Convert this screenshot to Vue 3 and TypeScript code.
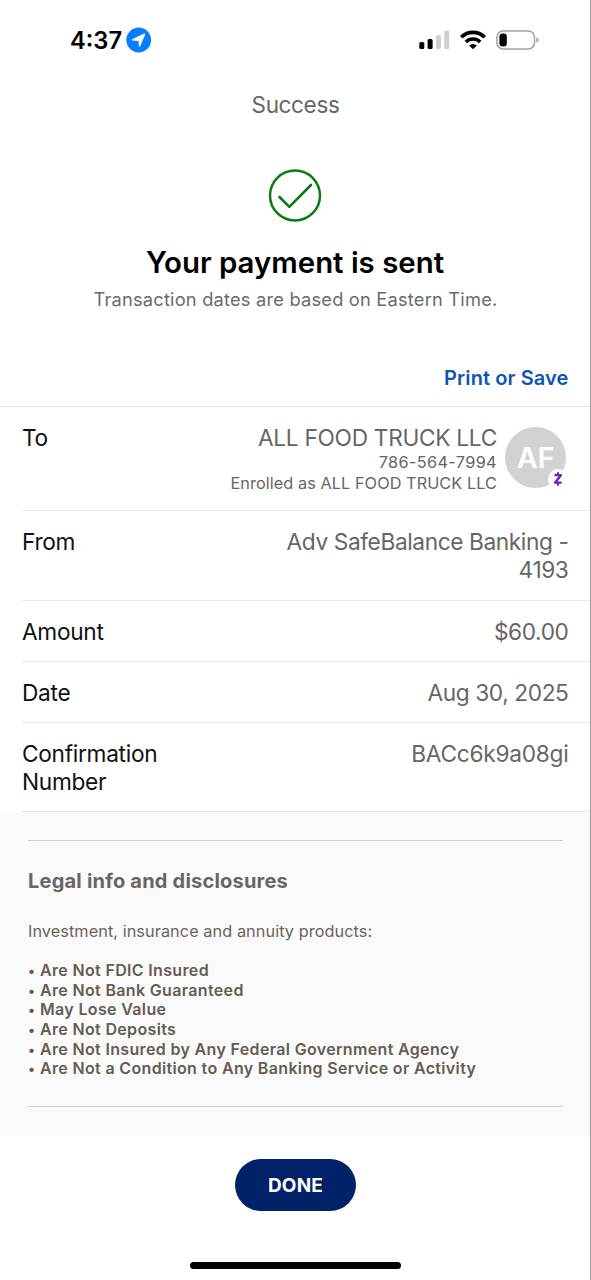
<script setup lang="ts">
interface DetailRow {
  label: string
  value: string
  key: string
}

const rows: DetailRow[] = [
  { key: 'from', label: 'From', value: 'Adv SafeBalance Banking - 4193' },
  { key: 'amount', label: 'Amount', value: '$60.00' },
  { key: 'date', label: 'Date', value: 'Aug 30, 2025' },
  { key: 'confirmation', label: 'Confirmation Number', value: 'BACc6k9a08gi' },
]

const disclosures: string[] = [
  'Are Not FDIC Insured',
  'Are Not Bank Guaranteed',
  'May Lose Value',
  'Are Not Deposits',
  'Are Not Insured by Any Federal Government Agency',
  'Are Not a Condition to Any Banking Service or Activity',
]
</script>

<template>
  <main class="screen">
    <header class="status">
      <div class="clock">
        <span class="time">4:37</span>
        <svg class="location" width="26" height="26" viewBox="0 0 26 26">
          <circle cx="12.700" cy="13" r="12.400" fill="#0a7cff" />
          <path d="M19 8 14.200 19.300q-.8 1.300-1.200-.1L12.400 13.900 6.600 13.500q-1.500-.4-.2-1.300L17.500 6.700q2-.6 1.500 1.300Z" fill="#fff" />
        </svg>
      </div>
      <div class="indicators">
        <svg width="32" height="20" viewBox="0 0 32 20">
          <rect x="0.300" y="12" width="5" height="7" rx="1.500" fill="#000" />
          <rect x="8.600" y="9" width="5" height="10" rx="1.500" fill="#000" />
          <rect x="17" y="5" width="5" height="14" rx="1.500" fill="#cfcfcf" />
          <rect x="25.200" y="0.500" width="5" height="18.500" rx="1.500" fill="#cfcfcf" />
        </svg>
        <svg class="wifi" width="26" height="20" viewBox="0 0 26 20">
          <path d="M1.300 7.200a16.700 16.700 0 0 1 23.400 0" fill="none" stroke="#000" stroke-width="3.700" />
          <path d="M5.800 11.900a10.300 10.300 0 0 1 14.400 0" fill="none" stroke="#000" stroke-width="3.500" />
          <path d="M13 19.300 9.100 15.500q3.900-3 7.800 0Z" fill="#000" />
        </svg>
        <svg class="battery" width="44" height="20" viewBox="0 0 44 20">
          <rect x="0.900" y="0.900" width="37.600" height="18" rx="6" fill="none" stroke="#a3a3a3" stroke-width="1.500" />
          <rect x="3.400" y="3.400" width="7.400" height="13" rx="3.200" fill="#000" />
          <path d="M40.300 7v6q2.200-.8 2.200-3t-2.200-3Z" fill="#a3a3a3" />
        </svg>
      </div>
    </header>

    <div class="nav-title">Success</div>

    <section class="hero">
      <svg class="check" width="54" height="54" viewBox="0 0 54 54" fill="none" stroke="#0c7a12">
        <circle cx="27" cy="27.500" r="25" stroke-width="2.500" />
        <path d="M11.500 29 21.300 38.800 43 17" stroke-width="2.600" stroke-linecap="round" stroke-linejoin="round" />
      </svg>
      <h1>Your payment is sent</h1>
      <p class="subtitle">Transaction dates are based on Eastern Time.</p>
    </section>

    <div class="actions"><a class="print">Print or Save</a></div>

    <section class="details">
      <div class="row to">
        <span class="label">To</span>
        <div class="payee">
          <div class="payee-name">ALL FOOD TRUCK LLC</div>
          <div class="payee-sub phone">786-564-7994</div>
          <div class="payee-sub">Enrolled as ALL FOOD TRUCK LLC</div>
        </div>
        <div class="avatar">
          <span class="initials">AF</span>
          <span class="badge">
            <svg width="10" height="16" viewBox="0 0 10 16" fill="none" stroke="#6b22c4">
              <path d="M1.500 4.200H7.900L2 11.700H8.700" stroke-width="2.300" stroke-linejoin="round" />
              <path d="M5 1.200V4M5 12V14.800" stroke-width="2" />
            </svg>
          </span>
        </div>
      </div>
      <div v-for="row in rows" :key="row.key" class="row" :class="row.key">
        <span class="label">{{ row.label }}</span>
        <span class="value">{{ row.value }}</span>
      </div>
    </section>

    <section class="legal">
      <div class="legal-body">
        <h2>Legal info and disclosures</h2>
        <p>Investment, insurance and annuity products:</p>
        <ul>
          <li v-for="item in disclosures" :key="item">
            <span class="dot">•</span><span>{{ item }}</span>
          </li>
        </ul>
      </div>
    </section>

    <footer class="footer">
      <button class="done" type="button">DONE</button>
      <div class="home-bar"></div>
    </footer>
  </main>
</template>

<style>
body {
  background: #fff;
}
</style>

<style scoped>
.screen {
  box-sizing: border-box;
  width: 591px;
  height: 1280px;
  overflow: hidden;
  display: flex;
  flex-direction: column;
  background: #fff;
  border-right: 1px solid #999;
  font-family: Inter, "Liberation Sans", sans-serif;
  color: #111;
}
h1, h2, p, ul {
  margin: 0;
  padding: 0;
  font-weight: 400;
}
.status {
  height: 80px;
  display: flex;
  justify-content: space-between;
  align-items: center;
  padding: 0 50px 0 70px;
}
.clock, .indicators {
  display: flex;
  align-items: center;
}
.time {
  width: 56px;
  font-size: 23.700px;
  font-weight: 600;
  color: #000;
}
.wifi {
  margin-left: 9px;
}
.battery {
  margin-left: 10px;
}
.nav-title {
  height: 50px;
  padding-left: 1px;
  line-height: 50px;
  text-align: center;
  font-size: 22.500px;
  letter-spacing: -0.350px;
  color: #666;
}
.hero {
  height: 232px;
  display: flex;
  flex-direction: column;
  align-items: center;
}
.check {
  margin-top: 38px;
}
h1 {
  margin-top: 23px;
  line-height: 36px;
  font-size: 29.400px;
  font-weight: 600;
  letter-spacing: 0;
  color: #000;
  white-space: nowrap;
}
.subtitle {
  margin-top: 6px;
  padding-left: 1px;
  line-height: 24px;
  font-size: 18.300px;
  letter-spacing: 0.190px;
  color: #6b6b6b;
  white-space: nowrap;
}
.actions {
  height: 44px;
  display: flex;
  justify-content: flex-end;
  padding: 0 21.500px 0 0;
  border-bottom: 1px solid #e4e4e4;
}
.print {
  margin-top: 4px;
  line-height: 24px;
  font-size: 20px;
  font-weight: 600;
  letter-spacing: 0.100px;
  color: #0f55b4;
}
.row {
  box-sizing: border-box;
  height: 61px;
  margin-left: 22px;
  padding: 17px 21.500px 0 0;
  display: flex;
  justify-content: space-between;
  border-bottom: 1px solid #e9e9e9;
  font-size: 22.700px;
  line-height: 27.500px;
  letter-spacing: -0.300px;
}
.row.to {
  height: 104px;
}
.row.from {
  height: 90px;
}
.row.confirmation {
  height: 89px;
}
.label {
  width: 150px;
}
.value {
  width: 290px;
  text-align: right;
  letter-spacing: -0.400px;
  color: #666;
}
.confirmation .value {
  letter-spacing: -0.260px;
}
.payee {
  flex: 1;
  text-align: right;
  color: #666;
  white-space: nowrap;
}
.payee-sub {
  font-size: 16.300px;
  line-height: 21px;
  letter-spacing: 0.060px;
}
.payee-sub.phone {
  letter-spacing: 0.360px;
}
.avatar {
  position: relative;
  width: 61px;
  height: 61px;
  margin: 3px 2.500px 0 8px;
  border-radius: 50%;
  background: #d2d2d2;
  display: flex;
  align-items: center;
  justify-content: center;
}
.initials {
  font-size: 29px;
  font-weight: 600;
  color: #fff;
}
.badge {
  position: absolute;
  right: -2px;
  bottom: -1px;
  width: 20px;
  height: 20px;
  border-radius: 50%;
  background: #fff;
  display: flex;
  align-items: center;
  justify-content: center;
}
.legal {
  box-sizing: border-box;
  height: 324px;
  padding: 28px 27px 0 28px;
  background: #fafafa;
}
.legal-body {
  box-sizing: border-box;
  height: 267px;
  border-top: 1px solid #cfcfcf;
  border-bottom: 1px solid #cfcfcf;
  padding-top: 27px;
}
h2 {
  line-height: 26px;
  font-size: 20px;
  font-weight: 700;
  letter-spacing: 0.210px;
  color: #666;
}
.legal p {
  margin-top: 27px;
  line-height: 20px;
  font-size: 16.300px;
  letter-spacing: 0.060px;
  color: #6b635b;
}
.legal ul {
  margin-top: 20px;
  list-style: none;
}
.legal li {
  display: flex;
  line-height: 19.650px;
  font-size: 16px;
  font-weight: 600;
  letter-spacing: 0.340px;
  color: #655c54;
  white-space: nowrap;
}
.dot {
  width: 12px;
  font-size: 14px;
}
.footer {
  flex: 1;
  display: flex;
  flex-direction: column;
  align-items: center;
}
.done {
  width: 121px;
  height: 52px;
  margin-top: 23px;
  padding: 0 0 0 1px;
  border: 0;
  border-radius: 26px;
  background: #012169;
  color: #fff;
  font-family: inherit;
  font-size: 19px;
  font-weight: 650;
  letter-spacing: 0.200px;
}
.home-bar {
  width: 211px;
  height: 7px;
  margin-top: 51px;
  border-radius: 4px;
  background: #000;
}
</style>
